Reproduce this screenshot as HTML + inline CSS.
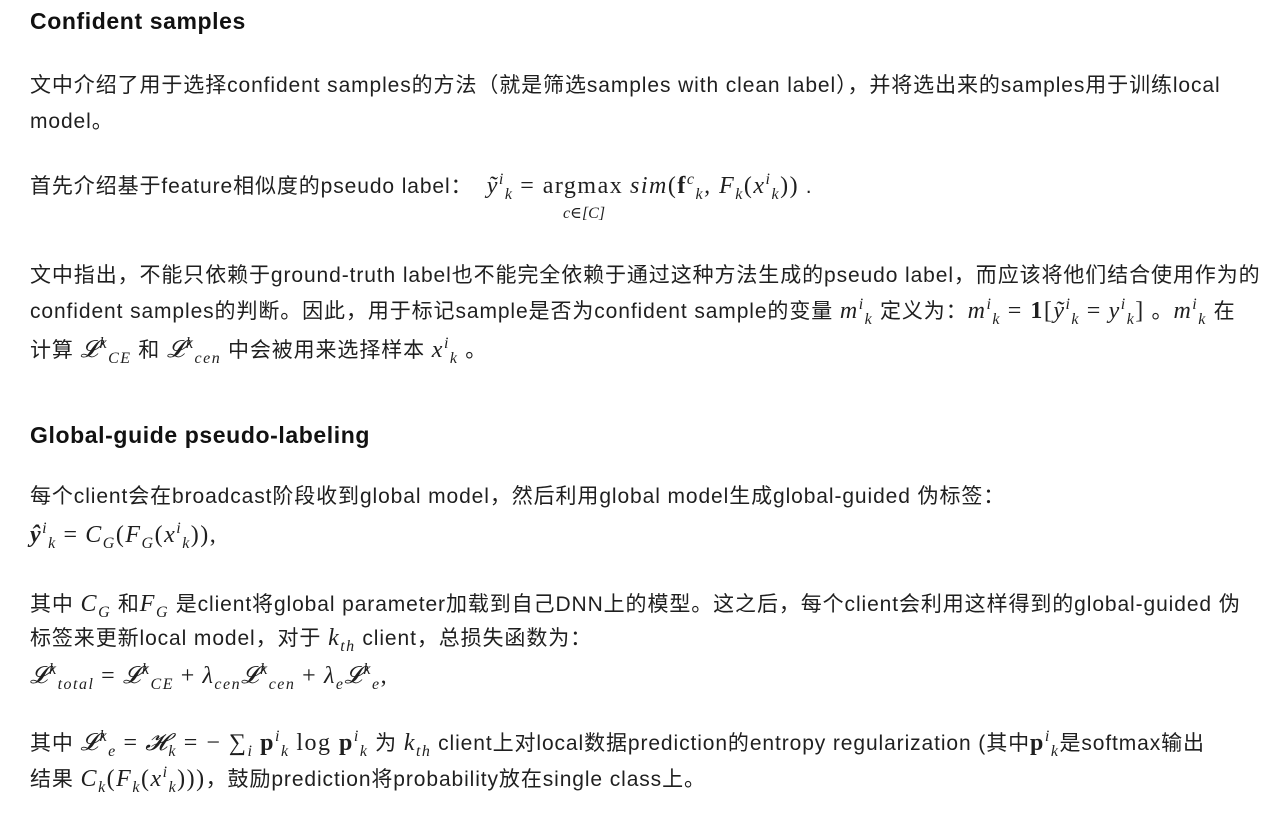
<!DOCTYPE html>
<html><head><meta charset="utf-8"><style>
body{margin:0;background:#fff;width:1279px;height:818px;overflow:hidden;position:relative;font-family:"Liberation Sans","Noto Sans CJK SC",sans-serif;color:#1f1f1f;font-size:21px;letter-spacing:0.9px}
.l{position:absolute;left:30px;white-space:nowrap;line-height:28px}
h3{position:absolute;left:30px;margin:0;font-size:23px;letter-spacing:0.6px;font-weight:bold;line-height:28px;color:#111}
.m{font-family:"Liberation Serif","DejaVu Serif",serif;font-style:italic;font-size:24px;letter-spacing:1.5px}
.r{font-family:"Liberation Serif","DejaVu Serif",serif;font-style:normal;font-size:24px;letter-spacing:1.5px}
sub,sup{font-size:16px;line-height:0}
</style></head><body>
<h3 style="top:7px">Confident samples</h3>
<div class="l" style="top:72px">文中介绍了用于选择confident samples的方法（就是筛选samples with clean label），并将选出来的samples用于训练local</div>
<div class="l" style="top:108px">model。</div>
<div class="l" style="top:172px">首先介绍基于feature相似度的pseudo label： <span class="m">&nbsp;ỹ<sup>i</sup><sub>k</sub></span> <span class="r">= argmax</span> <span class="m">sim</span><span class="r">(<b>f</b></span><span class="m"><sup>c</sup><sub>k</sub>, F<sub>k</sub></span><span class="r">(</span><span class="m">x<sup>i</sup><sub>k</sub></span><span class="r">))</span> .</div>
<div class="l m" style="top:200px;left:563px;font-size:16px;letter-spacing:0">c∈[C]</div>
<div class="l" style="top:262px">文中指出，不能只依赖于ground-truth label也不能完全依赖于通过这种方法生成的pseudo label，而应该将他们结合使用作为的</div>
<div class="l" style="top:297px">confident samples的判断。因此，用于标记sample是否为confident sample的变量 <span class="m">m<sup>i</sup><sub>k</sub></span> 定义为：<span class="m">m<sup>i</sup><sub>k</sub></span> <span class="r">= <b>1</b>[</span><span class="m">ỹ<sup>i</sup><sub>k</sub></span> <span class="r">=</span> <span class="m">y<sup>i</sup><sub>k</sub></span><span class="r">]</span> 。<span class="m">m<sup>i</sup><sub>k</sub></span> 在</div>
<div class="l" style="top:336px">计算 <span class="m">𝓛<sup>k</sup><sub>CE</sub></span> 和 <span class="m">𝓛<sup>k</sup><sub>cen</sub></span> 中会被用来选择样本 <span class="m">x<sup>i</sup><sub>k</sub></span> 。</div>
<h3 style="top:421px">Global-guide pseudo-labeling</h3>
<div class="l" style="top:483px">每个client会在broadcast阶段收到global model，然后利用global model生成global-guided 伪标签：</div>
<div class="l" style="top:521px"><span class="m"><b>ŷ</b><sup>i</sup><sub>k</sub></span> <span class="r">=</span> <span class="m">C<sub>G</sub></span><span class="r">(</span><span class="m">F<sub>G</sub></span><span class="r">(</span><span class="m">x<sup>i</sup><sub>k</sub></span><span class="r">)),</span></div>
<div class="l" style="top:590px">其中 <span class="m">C<sub>G</sub></span> 和<span class="m">F<sub>G</sub></span> 是client将global parameter加载到自己DNN上的模型。这之后，每个client会利用这样得到的global-guided 伪</div>
<div class="l" style="top:624px">标签来更新local model，对于 <span class="m">k<sub>th</sub></span> client，总损失函数为：</div>
<div class="l" style="top:662px"><span class="m">𝓛<sup>k</sup><sub>total</sub></span> <span class="r">=</span> <span class="m">𝓛<sup>k</sup><sub>CE</sub></span> <span class="r">+</span> <span class="m">λ<sub>cen</sub>𝓛<sup>k</sup><sub>cen</sub></span> <span class="r">+</span> <span class="m">λ<sub>e</sub>𝓛<sup>k</sup><sub>e</sub></span><span class="r">,</span></div>
<div class="l" style="top:729px">其中 <span class="m">𝓛<sup>k</sup><sub>e</sub></span> <span class="r">=</span> <span class="m">𝓗<sub>k</sub></span> <span class="r">= − ∑</span><span class="m"><sub>i</sub></span> <span class="r"><b>p</b></span><span class="m"><sup>i</sup><sub>k</sub></span> <span class="r">log <b>p</b></span><span class="m"><sup>i</sup><sub>k</sub></span> 为 <span class="m">k<sub>th</sub></span> client上对local数据prediction的entropy regularization (其中<span class="r"><b>p</b></span><span class="m"><sup>i</sup><sub>k</sub></span>是softmax输出</div>
<div class="l" style="top:765px">结果 <span class="m">C<sub>k</sub></span><span class="r">(</span><span class="m">F<sub>k</sub></span><span class="r">(</span><span class="m">x<sup>i</sup><sub>k</sub></span><span class="r">)))</span>，鼓励prediction将probability放在single class上。</div>
</body></html>
